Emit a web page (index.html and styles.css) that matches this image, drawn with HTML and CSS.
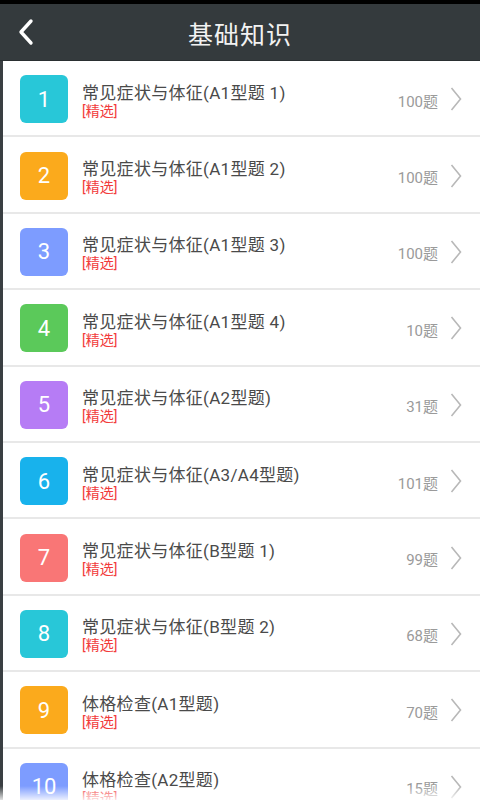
FILE: index.html
```html
<!DOCTYPE html>
<html lang="zh-CN">

<head>
    <meta charset="UTF-8">
    <meta name="viewport" content="width=device-width, initial-scale=1.0">
    <title>基础知识</title>
    <link rel="stylesheet" href="styles.css">
</head>

<body>
    <div class="statusbar"></div>
    <header class="topbar">
        <svg class="back" width="20" height="28" viewBox="0 0 20 28">
            <path d="M15 3 L5 14 L15 25" fill="none" stroke="#fff" stroke-width="3.4" stroke-linecap="round" stroke-linejoin="round" />
        </svg>
        <h1 class="title">基础知识</h1>
    </header>

    <ul class="list">
        <li class="item">
            <span class="num c-cyan">1</span>
            <div class="info">
                <p class="name">常见症状与体征(A1型题 1)</p>
                <p class="tag">[精选]</p>
            </div>
            <span class="count">100题</span>
            <svg class="arrow" width="12" height="24" viewBox="0 0 12 24"><path d="M1.5 1 L10.5 12 L1.5 23" /></svg>
        </li>
        <li class="item">
            <span class="num c-orange">2</span>
            <div class="info">
                <p class="name">常见症状与体征(A1型题 2)</p>
                <p class="tag">[精选]</p>
            </div>
            <span class="count">100题</span>
            <svg class="arrow" width="12" height="24" viewBox="0 0 12 24"><path d="M1.5 1 L10.5 12 L1.5 23" /></svg>
        </li>
        <li class="item">
            <span class="num c-blue">3</span>
            <div class="info">
                <p class="name">常见症状与体征(A1型题 3)</p>
                <p class="tag">[精选]</p>
            </div>
            <span class="count">100题</span>
            <svg class="arrow" width="12" height="24" viewBox="0 0 12 24"><path d="M1.5 1 L10.5 12 L1.5 23" /></svg>
        </li>
        <li class="item">
            <span class="num c-green">4</span>
            <div class="info">
                <p class="name">常见症状与体征(A1型题 4)</p>
                <p class="tag">[精选]</p>
            </div>
            <span class="count">10题</span>
            <svg class="arrow" width="12" height="24" viewBox="0 0 12 24"><path d="M1.5 1 L10.5 12 L1.5 23" /></svg>
        </li>
        <li class="item">
            <span class="num c-purple">5</span>
            <div class="info">
                <p class="name">常见症状与体征(A2型题)</p>
                <p class="tag">[精选]</p>
            </div>
            <span class="count">31题</span>
            <svg class="arrow" width="12" height="24" viewBox="0 0 12 24"><path d="M1.5 1 L10.5 12 L1.5 23" /></svg>
        </li>
        <li class="item">
            <span class="num c-sky">6</span>
            <div class="info">
                <p class="name">常见症状与体征(A3/A4型题)</p>
                <p class="tag">[精选]</p>
            </div>
            <span class="count">101题</span>
            <svg class="arrow" width="12" height="24" viewBox="0 0 12 24"><path d="M1.5 1 L10.5 12 L1.5 23" /></svg>
        </li>
        <li class="item">
            <span class="num c-red">7</span>
            <div class="info">
                <p class="name">常见症状与体征(B型题 1)</p>
                <p class="tag">[精选]</p>
            </div>
            <span class="count">99题</span>
            <svg class="arrow" width="12" height="24" viewBox="0 0 12 24"><path d="M1.5 1 L10.5 12 L1.5 23" /></svg>
        </li>
        <li class="item">
            <span class="num c-cyan">8</span>
            <div class="info">
                <p class="name">常见症状与体征(B型题 2)</p>
                <p class="tag">[精选]</p>
            </div>
            <span class="count">68题</span>
            <svg class="arrow" width="12" height="24" viewBox="0 0 12 24"><path d="M1.5 1 L10.5 12 L1.5 23" /></svg>
        </li>
        <li class="item">
            <span class="num c-orange">9</span>
            <div class="info">
                <p class="name">体格检查(A1型题)</p>
                <p class="tag">[精选]</p>
            </div>
            <span class="count">70题</span>
            <svg class="arrow" width="12" height="24" viewBox="0 0 12 24"><path d="M1.5 1 L10.5 12 L1.5 23" /></svg>
        </li>
        <li class="item">
            <span class="num c-blue">10</span>
            <div class="info">
                <p class="name">体格检查(A2型题)</p>
                <p class="tag">[精选]</p>
            </div>
            <span class="count">15题</span>
            <svg class="arrow" width="12" height="24" viewBox="0 0 12 24"><path d="M1.5 1 L10.5 12 L1.5 23" /></svg>
        </li>
    </ul>

    <div class="fade"></div>
</body>

</html>
```

FILE: styles.css
```css
* {
    margin: 0;
    padding: 0;
    box-sizing: border-box;
}

body {
    width: 480px;
    height: 800px;
    overflow: hidden;
    background: #fff;
    font-family: Roboto, "Noto Sans CJK SC", sans-serif;
    position: relative;
}

.statusbar {
    height: 4px;
    background: #000;
}

.topbar {
    height: 57px;
    background: #343a3d;
    display: flex;
    align-items: center;
    justify-content: center;
    position: relative;
    border-bottom: 1px solid #2a2f31;
}

.back {
    position: absolute;
    left: 16px;
    top: 14px;
}

.title {
    color: #f2f2f2;
    font-size: 25px;
    font-weight: normal;
    letter-spacing: 1px;
    margin-top: 2px;
}

.list {
    list-style: none;
    border-left: 3px solid #3a3f42;
}

.item {
    height: 76.4px;
    display: flex;
    align-items: center;
    padding: 0 18px 0 17px;
    border-bottom: 2px solid #e8e8e8;
}

.num {
    width: 48px;
    height: 48px;
    border-radius: 6px;
    color: #fff;
    font-size: 22px;
    display: flex;
    align-items: center;
    justify-content: center;
    flex-shrink: 0;
    margin-top: 2px;
}

.c-cyan { background: #28c7d8; }
.c-orange { background: #fbaa1c; }
.c-blue { background: #7d9cff; }
.c-green { background: #5bc95a; }
.c-purple { background: #b67cf5; }
.c-sky { background: #18b2ec; }
.c-red { background: #f97676; }

.info {
    flex: 1;
    margin-left: 14px;
    margin-top: 6px;
}

.name {
    font-size: 17px;
    color: #4a4a4a;
    line-height: 20px;
    letter-spacing: 0.3px;
}

.tag {
    font-size: 14px;
    color: #f23b3b;
    line-height: 17px;
}

.count {
    font-size: 15px;
    color: #9a9a9a;
    margin-right: 12px;
    margin-top: 4px;
}

.arrow {
    flex-shrink: 0;
    margin-top: 2px;
}

.arrow path {
    fill: none;
    stroke: #b8b8b8;
    stroke-width: 1.6;
}

.fade {
    position: absolute;
    left: 0;
    right: 0;
    bottom: 0;
    height: 14px;
    background: linear-gradient(rgba(255, 255, 255, 0), rgba(255, 255, 255, 0.85));
}
```
